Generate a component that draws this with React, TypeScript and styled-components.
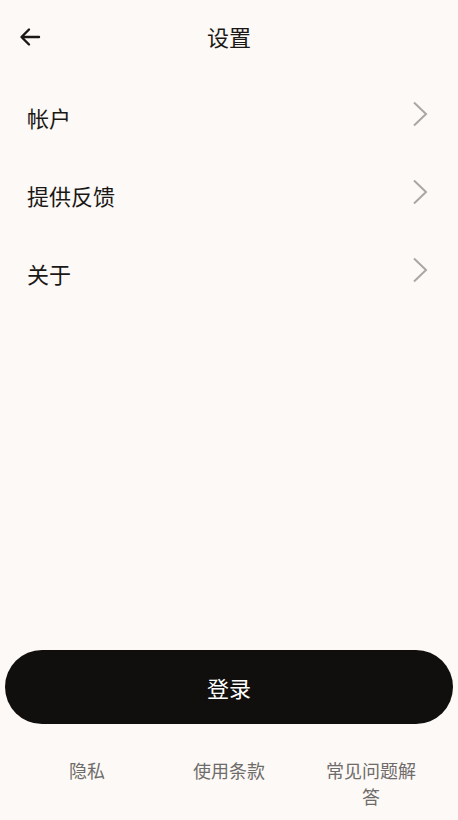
import React from 'react';
import styled, { createGlobalStyle } from 'styled-components';

const GlobalStyle = createGlobalStyle`
  html, body {
    margin: 0;
    padding: 0;
    background: #fdf9f6;
  }
  body {
    font-family: "Noto Sans CJK SC", "Noto Sans", sans-serif;
    color: #1a1816;
  }
`;

const Page = styled.div`
  display: flex;
  flex-direction: column;
  height: 100vh;
  box-sizing: border-box;
  background: #fdf9f6;
`;

const Header = styled.header`
  position: relative;
  display: flex;
  align-items: center;
  justify-content: center;
  height: 76px;
`;

const BackButton = styled.button`
  position: absolute;
  left: 14px;
  top: 21px;
  width: 32px;
  height: 32px;
  display: flex;
  align-items: center;
  justify-content: center;
  padding: 0;
  border: none;
  background: transparent;
  cursor: pointer;
`;

const Title = styled.h1`
  margin: 0 0 4px;
  font-size: 22px;
  font-weight: 400;
  line-height: 1;
  color: #1a1816;
`;

const List = styled.div`
  display: flex;
  flex-direction: column;
  padding-top: 2px;
`;

const Row = styled.div`
  display: flex;
  align-items: center;
  justify-content: space-between;
  height: 78px;
  padding: 0 30px 0 27px;
  cursor: pointer;

  svg {
    margin-bottom: 6px;
  }
`;

const RowLabel = styled.span`
  font-size: 22px;
  line-height: 1;
  color: #1a1816;
`;

const Spacer = styled.div`
  flex: 1;
`;

const LoginButton = styled.button`
  display: flex;
  align-items: center;
  justify-content: center;
  height: 74px;
  margin: 0 5px;
  border: none;
  border-radius: 37px;
  background: #110f0d;
  color: #ffffff;
  font-family: inherit;
  font-size: 22px;
  cursor: pointer;
`;

const Footer = styled.nav`
  display: grid;
  grid-template-columns: repeat(3, 1fr);
  padding: 33px 16px 11px;
`;

const FooterLink = styled.a`
  padding: 0 20px;
  text-align: center;
  font-size: 18px;
  line-height: 26px;
  color: #6e6c6a;
  cursor: pointer;
`;

const BackIcon = () => (
  <svg width="22" height="20" viewBox="0 0 22 20" fill="none">
    <path
      d="M20 10H3M10 2.5L2.5 10L10 17.5"
      stroke="#1a1816"
      strokeWidth="2.4"
      strokeLinecap="round"
      strokeLinejoin="round"
    />
  </svg>
);

const Chevron = () => (
  <svg width="16" height="26" viewBox="0 0 16 26" fill="none">
    <path d="M2 1.5L14 13L2 24.5" stroke="#a9a7a4" strokeWidth="2" />
  </svg>
);

const items = ['帐户', '提供反馈', '关于'];
const links = ['隐私', '使用条款', '常见问题解答'];

export default function App() {
  return (
    <>
      <GlobalStyle />
      <Page>
        <Header>
          <BackButton aria-label="返回">
            <BackIcon />
          </BackButton>
          <Title>设置</Title>
        </Header>
        <List>
          {items.map((label) => (
            <Row key={label}>
              <RowLabel>{label}</RowLabel>
              <Chevron />
            </Row>
          ))}
        </List>
        <Spacer />
        <LoginButton>登录</LoginButton>
        <Footer>
          {links.map((label) => (
            <FooterLink key={label}>{label}</FooterLink>
          ))}
        </Footer>
      </Page>
    </>
  );
}
